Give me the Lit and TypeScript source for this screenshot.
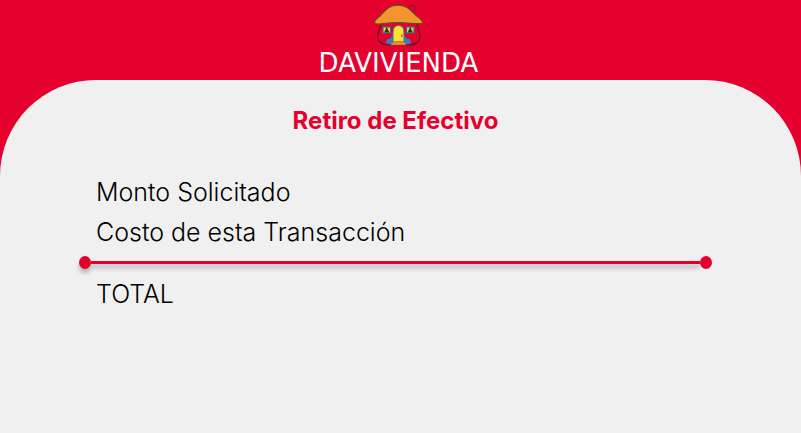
import { LitElement, html, css } from "lit";
import { customElement } from "lit/decorators.js";

@customElement("bank-logo")
class BankLogo extends LitElement {
  static styles = css`
    :host {
      display: flex;
      flex-direction: column;
      align-items: center;
      color: #fff;
    }
    .house {
      display: block;
      width: 52px;
      height: 44px;
    }
    .name {
      font: 400 26px/30px "DejaVu Sans", sans-serif;
    }
  `;

  render() {
    return html`
      <svg class="house" viewBox="0 0 52 44" aria-hidden="true">
        <path d="M37 7V3.500Q37 2.500 38 2.200L41.500 1.500Q43.500 1.500 43.500 3L42.500 10Z" fill="#e6002e" stroke="#8a1428" stroke-width="1" />
        <path d="M9 18C9 25 5.500 28 5.500 33C5.500 38 11 41 17 41H36C43 41 48 38 48 33C48 28 45 25 45 18Z" fill="#e6002e" stroke="#5a1722" stroke-width="1.200" />
        <path d="M14 38Q15 34 18 35L20 32H33L35 35Q38 34 39 38Q39 40 35 40H18Q14 40 14 38Z" fill="#2b84bd" />
        <path d="M21 38V28Q21 21.500 26.500 21.500Q32 21.500 32 28V38Z" fill="#f9e032" stroke="#39709a" stroke-width="1" />
        <path d="M19 41Q19 37.500 26.500 37.500Q34 37.500 34 41Z" fill="#f08f35" stroke="#c2622c" stroke-width=".6" />
        <path d="M29 31H31M29 32.500H30.500" stroke="#67521c" stroke-width=".8" />
        <g fill="#e2cf35" stroke="#2470a0" stroke-width="1">
          <rect x="11" y="23" width="7.500" height="6" />
          <rect x="34.500" y="23" width="7.500" height="6" />
        </g>
        <path d="M14 23.500H15.500V25L17.500 28.500H12L14 25ZM37.500 23.500H39V25L41 28.500H35.500L37.500 25Z" fill="#26301f" />
        <path d="M2.500 18C3 15.500 5 14.500 8 12C12 8 16 1.200 25.500 1.200C35 1.200 38 6 43 10.500C46 13.500 50 15.500 50.500 18C50.500 20.500 46 19.500 41 19.500C32 18.500 20 18.500 12 19.500C8 20 2.500 21 2.500 18Z" fill="#f2952f" stroke="#6d4a20" stroke-width="1.200" />
      </svg>
      <span class="name">DAVIVIENDA</span>
    `;
  }
}

@customElement("app-root")
class AppRoot extends LitElement {
  static styles = css`
    :host {
      display: flex;
      flex-direction: column;
      min-height: 100vh;
      background: #e6002e;
      font-family: Inter, sans-serif;
      color: #000;
    }
    .top {
      box-sizing: border-box;
      height: 80px;
      padding: 4px 4px 0 0;
      display: flex;
      justify-content: center;
      align-items: flex-start;
    }
    .panel {
      flex: 1;
      padding: 25px 89px 24px 79px;
      background: #f0f0f0;
      border-radius: 96px 96px 0 0;
    }
    .title {
      margin: 0 0 35px;
      font-size: 24px;
      line-height: 32px;
      font-weight: 700;
      text-align: center;
      color: #e6002e;
    }
    .row {
      margin: 0;
      padding-left: 17px;
      font-size: 25px;
      line-height: 40px;
      font-weight: 300;
    }
    .rule {
      display: flex;
      align-items: center;
      height: 13px;
      margin: 4px 0 5px;
    }
    .dot {
      width: 12px;
      height: 13px;
      border-radius: 50%;
      background: #e6002e;
    }
    .line {
      flex: 1;
      height: 3px;
      background: #e6002e;
    }
    .shaded {
      filter: drop-shadow(0 4px 2px rgba(0, 0, 0, 0.25));
    }
  `;

  render() {
    return html`
      <header class="top"><bank-logo></bank-logo></header>
      <main class="panel">
        <h1 class="title">Retiro de Efectivo</h1>
        <p class="row">Monto Solicitado</p>
        <p class="row">Costo de esta Transacción</p>
        <div class="rule" role="separator">
          <span class="dot shaded"></span><span class="line shaded"></span><span class="dot"></span>
        </div>
        <p class="row">TOTAL</p>
      </main>
    `;
  }
}
